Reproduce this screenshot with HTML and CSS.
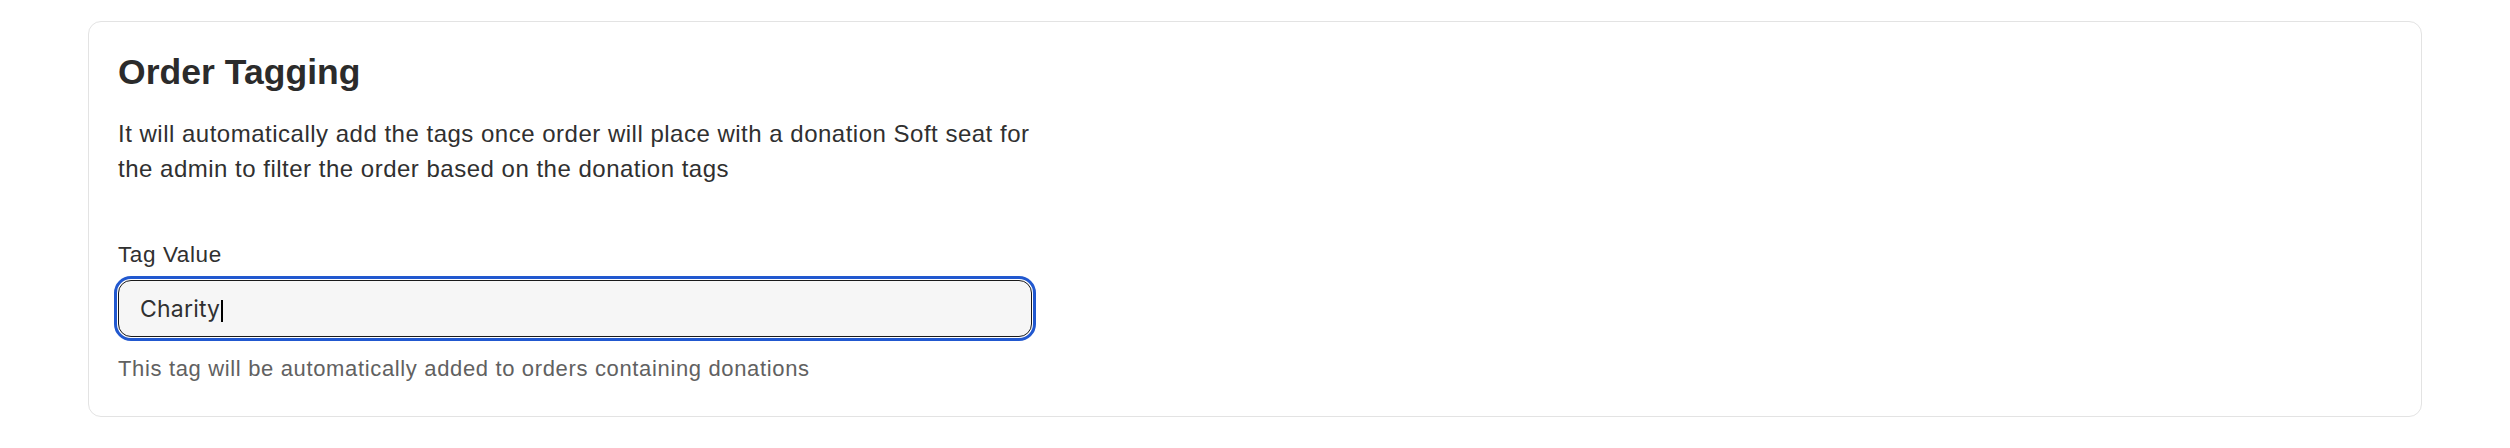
FILE: index.html
```html
<!DOCTYPE html>
<html lang="en">
<head>
<meta charset="utf-8">
<title>Order Tagging</title>
<link rel="stylesheet" href="styles.css">
</head>
<body>
<section class="card">
  <h2 class="card-title">Order Tagging</h2>
  <p class="card-desc">It will automatically add the tags once order will place with a donation Soft seat for the admin to filter the order based on the donation tags</p>
  <div class="field">
    <label class="field-label">Tag Value</label>
    <div class="text-input" role="textbox" aria-label="Tag Value"><span class="value">Charity</span><span class="caret"></span></div>
    <p class="field-help">This tag will be automatically added to orders containing donations</p>
  </div>
</section>
</body>
</html>
```

FILE: styles.css
```css
html, body {
  margin: 0;
  padding: 0;
  background: #ffffff;
}

body {
  padding: 21px 88px 0 88px;
  font-family: "Liberation Sans", Arial, sans-serif;
  color: #303030;
}

.card {
  border: 1px solid #e3e3e3;
  border-radius: 13px;
  padding: 30px 29px 31px 29px;
  background: #ffffff;
}

.card-title {
  margin: 0 0 24px 0;
  font-size: 35.5px;
  font-weight: 700;
  line-height: 40px;
  letter-spacing: 0.05px;
  color: #2b2b2b;
}

.card-desc {
  margin: 0;
  width: 925px;
  font-size: 24px;
  line-height: 35px;
  letter-spacing: 0.5px;
  color: #303030;
}

.field {
  margin-top: 52px;
  width: 914px;
}

.field-label {
  display: block;
  font-size: 22.5px;
  line-height: 33px;
  letter-spacing: 0.6px;
  color: #303030;
}

.text-input {
  margin-top: 9px;
  box-sizing: border-box;
  height: 57px;
  display: flex;
  align-items: center;
  padding: 0 21px;
  background: #f6f6f6;
  border: 1px solid #1a1a1a;
  border-radius: 13px;
  outline: 3px solid #2158cf;
  outline-offset: 1px;
  font-family: Inter, "Noto Sans", sans-serif;
  font-size: 23px;
  color: #303030;
}

.value {
  letter-spacing: 0.2px;
}

.caret {
  display: inline-block;
  width: 2px;
  height: 22px;
  margin-left: 1px;
  margin-top: 4px;
  background: #000000;
}

.field-help {
  margin: 15px 0 0 0;
  font-size: 22px;
  line-height: 33px;
  letter-spacing: 0.65px;
  color: #616161;
}
```
